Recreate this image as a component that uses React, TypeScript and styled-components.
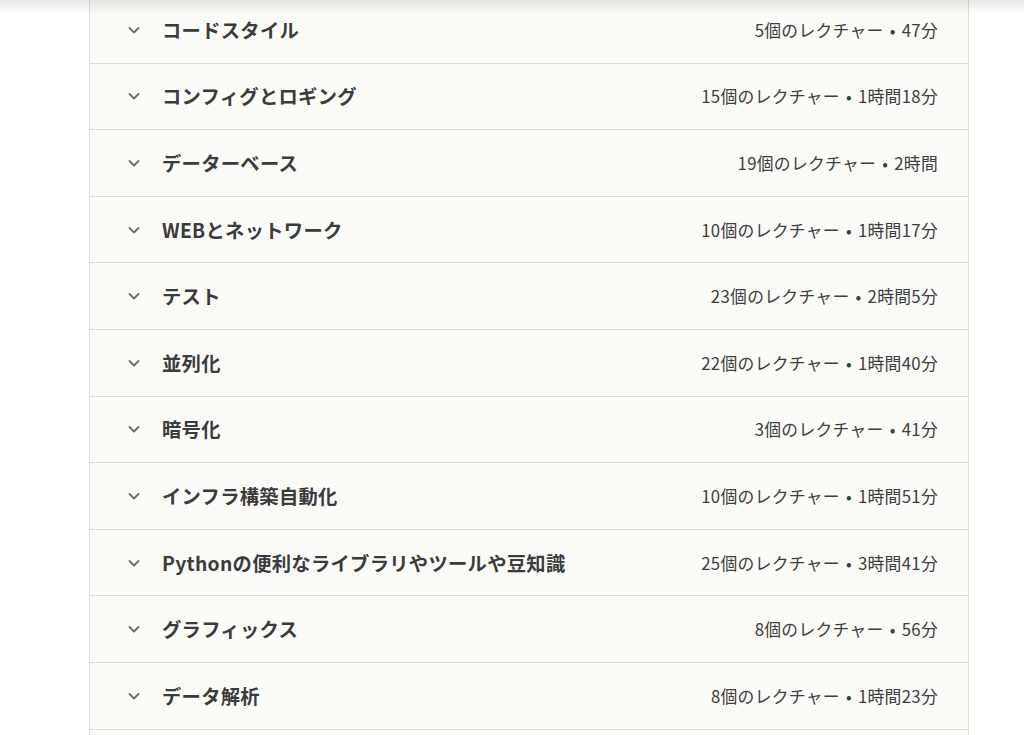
import styled, { createGlobalStyle } from "styled-components";

const GlobalStyle = createGlobalStyle`
    html, body {
        margin: 0;
        padding: 0;
        background: #ffffff;
        overflow: hidden;
    }
    body {
        font-family: "Noto Sans CJK JP", "Noto Sans", sans-serif;
        color: #2d2f31;
    }
`;

const Page = styled.div`
    width: 1024px;
    height: 735px;
    overflow: hidden;
    position: relative;
    padding-left: 89px;
    box-sizing: border-box;
`;

const TopShadow = styled.div`
    position: absolute;
    top: 0;
    left: 0;
    right: 0;
    height: 14px;
    background: linear-gradient(to bottom, rgba(0, 0, 0, 0.09), rgba(0, 0, 0, 0));
    z-index: 2;
`;

const Curriculum = styled.div`
    width: 880px;
    margin-top: -3px;
    border-left: 1px solid #dddcd4;
    border-right: 1px solid #dddcd4;
    box-sizing: border-box;
    background: #fafaf6;
`;

const Section = styled.div`
    height: 66.6px;
    box-sizing: border-box;
    border-bottom: 1px solid #dddcd4;
    display: flex;
    align-items: center;
    padding: 0 30px 0 37px;
`;

const Chevron = styled.svg`
    width: 14px;
    height: 14px;
    flex: none;
    color: #6a6b6c;
`;

const Title = styled.h3`
    margin: 0 0 0 21px;
    flex: 1;
    font-size: 19.3px;
    font-weight: 700;
    color: #3a3b3c;
    letter-spacing: 0.3px;
`;

const Meta = styled.span`
    font-size: 16.8px;
    color: #3d3e3f;
    white-space: nowrap;
    letter-spacing: 0.3px;
`;

const Dot = styled.span`
    margin: 0 6px;
`;

const sections = [
    { title: "コードスタイル", count: "5個のレクチャー", time: "47分" },
    { title: "コンフィグとロギング", count: "15個のレクチャー", time: "1時間18分" },
    { title: "データーベース", count: "19個のレクチャー", time: "2時間" },
    { title: "WEBとネットワーク", count: "10個のレクチャー", time: "1時間17分" },
    { title: "テスト", count: "23個のレクチャー", time: "2時間5分" },
    { title: "並列化", count: "22個のレクチャー", time: "1時間40分" },
    { title: "暗号化", count: "3個のレクチャー", time: "41分" },
    { title: "インフラ構築自動化", count: "10個のレクチャー", time: "1時間51分" },
    { title: "Pythonの便利なライブラリやツールや豆知識", count: "25個のレクチャー", time: "3時間41分" },
    { title: "グラフィックス", count: "8個のレクチャー", time: "56分" },
    { title: "データ解析", count: "8個のレクチャー", time: "1時間23分" },
    { title: "", count: "", time: "" },
];

export default function App() {
    return (
        <>
            <GlobalStyle />
            <Page>
                <TopShadow />
                <Curriculum>
                    {sections.map((s, i) => (
                        <Section key={i}>
                            {s.title && (
                                <>
                                    <Chevron viewBox="0 0 14 14" fill="none">
                                        <path
                                            d="M2.5 5l4.5 4.5L11.5 5"
                                            stroke="currentColor"
                                            strokeWidth="1.8"
                                            strokeLinecap="round"
                                            strokeLinejoin="round"
                                        />
                                    </Chevron>
                                    <Title>{s.title}</Title>
                                    <Meta>
                                        {s.count}
                                        <Dot>•</Dot>
                                        {s.time}
                                    </Meta>
                                </>
                            )}
                        </Section>
                    ))}
                </Curriculum>
            </Page>
        </>
    );
}
